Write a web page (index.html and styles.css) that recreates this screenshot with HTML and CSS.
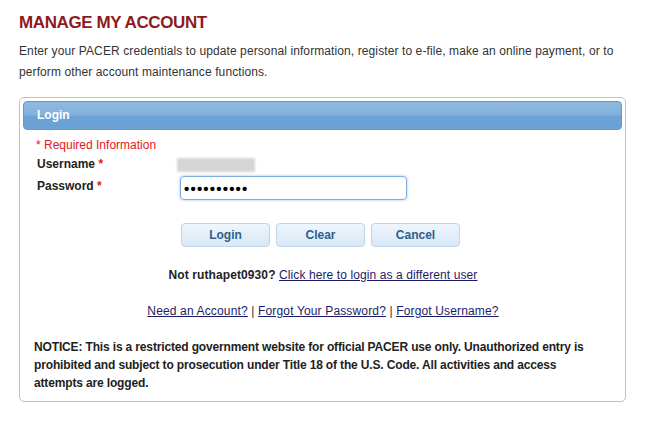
FILE: index.html
```html
<!DOCTYPE html>
<html lang="en">
<head>
  <meta charset="UTF-8" />
  <title>Manage My Account</title>
  <link rel="stylesheet" href="styles.css">
</head>
<body>
  <h1>MANAGE MY ACCOUNT</h1>
  <p class="intro">Enter your PACER credentials to update personal information, register to e-file, make an online payment, or to perform other account maintenance functions.</p>

  <div class="panel">
    <div class="panel-head">Login</div>
    <div class="panel-body">
      <div class="required">* Required Information</div>

      <div class="row">
        <label class="label">Username <span class="star">*</span></label>
        <div class="masked"></div>
      </div>
      <div class="row">
        <label class="label">Password <span class="star">*</span></label>
        <input class="field" type="password" value="ruthapet09">
      </div>

      <div class="buttons">
        <button class="btn">Login</button>
        <button class="btn">Clear</button>
        <button class="btn">Cancel</button>
      </div>

      <div class="switch-user"><b>Not ruthapet0930?</b> <a href="#">Click here to login as a different user</a></div>

      <div class="links">
        <a href="#">Need an Account?</a> | <a href="#">Forgot Your Password?</a> | <a href="#">Forgot Username?</a>
      </div>

      <div class="notice">NOTICE: This is a restricted government website for official PACER use only. Unauthorized entry is prohibited and subject to prosecution under Title 18 of the U.S. Code. All activities and access attempts are logged.</div>
    </div>
  </div>
</body>
</html>
```

FILE: styles.css
```css
body {
  margin: 0;
  padding: 0 21px 0 19px;
  font-family: "Liberation Sans", Arial, sans-serif;
  font-size: 12px;
  color: #333;
  background: #fff;
}

h1 {
  margin: 0;
  padding-top: 12px;
  font-size: 17px;
  line-height: 22px;
  letter-spacing: -0.4px;
  color: #8e1a1d;
}

.intro {
  margin: 7px 0 0;
  line-height: 21px;
  letter-spacing: 0.1px;
}

.panel {
  margin-top: 14px;
  border: 1px solid #a8c8e4;
  border-radius: 5px;
  padding: 3px;
}

.panel-head {
  height: 27px;
  line-height: 27px;
  padding-left: 13px;
  border: 1px solid #5f9bd1;
  border-radius: 4px;
  background: linear-gradient(#8fbae0 0%, #82b1dc 48%, #6ba3d7 52%, #6aa2d6 100%);
  color: #fff;
  font-weight: bold;
}

.panel-body {
  padding: 7px 12px 6px 13px;
}

.required {
  line-height: 16px;
  color: #e8141b;
}

.row {
  display: flex;
  align-items: flex-start;
  height: 22px;
}

.row:first-of-type {
  margin-top: 1px;
}

.label {
  width: 143px;
  padding-left: 1px;
  line-height: 22px;
  font-weight: bold;
  color: #222;
}

.star {
  color: #e8141b;
}

.masked {
  width: 78px;
  height: 14px;
  margin: 5px 0 0 -3px;
  background: #d6d6d6;
  filter: blur(1px);
}

.field {
  box-sizing: border-box;
  width: 227px;
  height: 24px;
  margin-top: 1px;
  padding: 0 3px;
  border: 1px solid #7eb0df;
  border-radius: 4px;
  box-shadow: 0 0 3px #9cc4ea;
  font-family: "Liberation Sans", Arial, sans-serif;
  font-size: 15px;
  font-weight: bold;
  color: #000;
  letter-spacing: 1.2px;
}

.buttons {
  display: flex;
  gap: 6px;
  margin-top: 26px;
  padding-left: 145px;
}

.btn {
  width: 89px;
  height: 24px;
  border: 1px solid #bcd5ec;
  border-radius: 4px;
  background: linear-gradient(#eef5fc, #d9e8f6);
  color: #2e5f8e;
  font-family: "Liberation Sans", Arial, sans-serif;
  font-size: 12px;
  font-weight: bold;
}

.switch-user {
  margin-top: 20px;
  line-height: 16px;
  text-align: center;
  color: #222;
  letter-spacing: 0.1px;
}

.links {
  margin-top: 20px;
  line-height: 16px;
  text-align: center;
  letter-spacing: 0.15px;
}

a {
  color: #1c1c66;
}

.notice {
  max-width: 560px;
  margin: 19px 0 0 -2px;
  line-height: 18px;
  font-weight: bold;
  color: #222;
  letter-spacing: -0.15px;
}
```
